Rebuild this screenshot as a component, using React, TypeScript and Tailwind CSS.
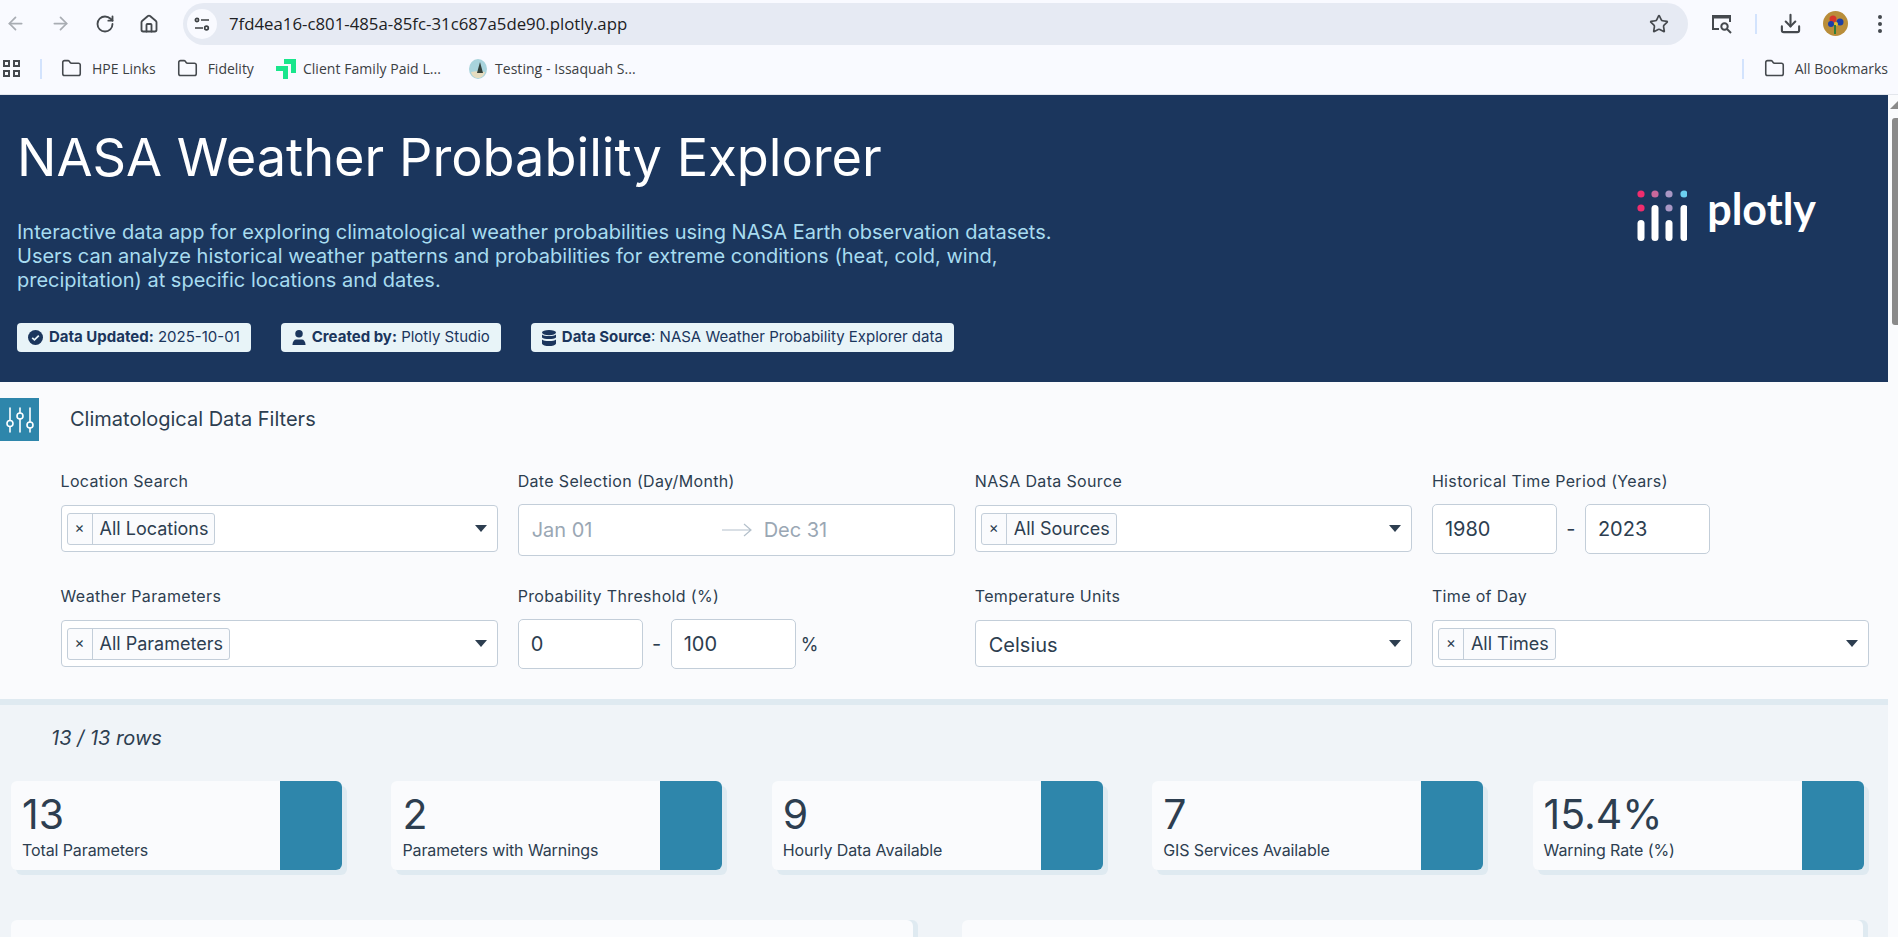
import React from 'react';
import { ArrowLeft, ArrowRight, RotateCw, Home, Star, Download, Folder } from 'lucide-react';

const inter = 'font-["Inter",sans-serif]';

const Tag = ({ label }: { label: string }) => (
  <div className="flex items-stretch h-[32px] border border-[#c3ced9] rounded-[3px] bg-[#fafbfd]">
    <span className="w-[25px] flex items-center justify-center border-r border-[#c3ced9] text-[15px] text-[#2d3e50]">×</span>
    <span className="pl-[7px] pr-[6px] flex items-center text-[18px] text-[#2d3e50]">{label}</span>
  </div>
);

const Caret = () => (
  <svg width="12" height="7" viewBox="0 0 12 7" className="shrink-0">
    <path d="M0 0h12L6 7z" fill="#2d3e50" />
  </svg>
);

const MultiSelect = ({ label }: { label: string }) => (
  <div className="h-[47px] mt-[1px] flex items-center justify-between pl-[5px] pr-[10px] bg-white border border-[#c3ced9] rounded-[4px]">
    <Tag label={label} />
    <Caret />
  </div>
);

const Field = ({ label, children }: { label: string; children: React.ReactNode }) => (
  <div className="flex flex-col">
    <label className="h-[24px] mb-[11px] flex items-center text-[16px] tracking-[0.35px] text-[#2d3e50]">{label}</label>
    {children}
  </div>
);

const NumberBox = ({ value }: { value: string }) => (
  <div className="w-[125px] h-[50px] flex items-center pl-[12px] bg-white border border-[#c3ced9] rounded-[5px] text-[20px] text-[#2d3e50]">
    {value}
  </div>
);

const Pill = ({ icon, bold, rest }: { icon: React.ReactNode; bold: string; rest: string }) => (
  <div className="h-[29px] flex items-center gap-[6px] px-[11px] bg-[#e8f4f8] rounded-[4px] text-[15px] text-[#1b365d]">
    {icon}
    <span className="whitespace-nowrap"><b className="font-bold">{bold}</b>{rest}</span>
  </div>
);

const Stat = ({ value, label }: { value: string; label: string }) => (
  <div className="flex h-[89px] w-[331px] bg-[#fafbfd] rounded-[6px] overflow-hidden shadow-[5px_5px_0_#dfeaf1]">
    <div className="flex-1 pl-[11px] pt-[11px] text-[#2d3e50]">
      <div className="text-[41px] leading-[44px]">{value}</div>
      <div className="text-[16px] mt-[2px] tracking-[-0.1px]">{label}</div>
    </div>
    <div className="w-[62px] bg-[#2e86ab]" />
  </div>
);

const BookmarkFolder = ({ label }: { label: string }) => (
  <div className="flex items-center gap-[10px] text-[14px] text-[#3c4043] whitespace-nowrap">
    <Folder size={21} strokeWidth={1.8} className="text-[#45494e]" />
    {label}
  </div>
);

const PlotlyLogo = () => (
  <div className="flex items-center gap-[20px]">
    <svg width="50" height="52" viewBox="0 0 50 52">
      <circle cx="4" cy="4" r="3.6" fill="#ef2d6e" />
      <circle cx="18" cy="4" r="3.6" fill="#c9689b" />
      <circle cx="32" cy="4" r="3.6" fill="#a997c4" />
      <circle cx="47" cy="4" r="3.6" fill="#6cd0f0" />
      <circle cx="4" cy="18" r="3.6" fill="#ef2d6e" />
      <circle cx="32" cy="18" r="3.6" fill="#a997c4" />
      <rect x="0.5" y="30" width="7" height="21" rx="3.5" fill="#fff" />
      <rect x="14.5" y="15" width="7" height="36" rx="3.5" fill="#fff" />
      <rect x="28.5" y="30" width="7" height="21" rx="3.5" fill="#fff" />
      <rect x="43.5" y="15" width="7" height="36" rx="3.5" fill="#fff" />
    </svg>
    <span className='mb-[14px] font-["Lato",sans-serif] font-bold text-[43px] leading-none text-white'>plotly</span>
  </div>
);

export default function App() {
  return (
    <div className='w-[1898px] h-[937px] overflow-hidden flex flex-col font-["Inter",sans-serif] bg-[#f0f4f8]'>
      {/* browser toolbar */}
      <div className='h-[47px] shrink-0 flex items-center bg-[#f9faff] font-["Open_Sans",sans-serif]'>
        <div className="w-[183px] shrink-0 flex items-center pl-[5px] gap-[24px] text-[#45494e]">
          <ArrowLeft size={21} className="text-[#a9adb3]" />
          <ArrowRight size={21} className="text-[#a9adb3]" />
          <RotateCw size={20} strokeWidth={2.2} />
          <Home size={20} strokeWidth={2.2} />
        </div>
        <div className="w-[1505px] h-[42px] flex items-center justify-between pl-[4px] pr-[19px] rounded-full bg-[#e6eaf3]">
          <div className="flex items-center gap-[12px]">
            <div className="w-[30px] h-[30px] rounded-full bg-[#f9faff] flex items-center justify-center">
              <svg width="16" height="14" viewBox="0 0 16 14" fill="none" stroke="#3c4043" strokeWidth="1.7">
                <circle cx="3" cy="3" r="1.6" />
                <path d="M7 3h8M1 11h8" />
                <circle cx="12.5" cy="11" r="1.8" />
              </svg>
            </div>
            <span className="text-[16.8px] text-[#202124]">7fd4ea16-c801-485a-85fc-31c687a5de90.plotly.app</span>
          </div>
          <Star size={20} strokeWidth={2} className="text-[#45494e]" />
        </div>
        <div className="flex-1 flex items-center pl-[23px] text-[#45494e]">
          <svg width="22" height="20" viewBox="0 0 22 20" fill="none" stroke="currentColor" strokeWidth="2">
            <path d="M8 15H2V2h17v6" />
            <path d="M2 3h17" strokeWidth="3" />
            <circle cx="13.5" cy="12.5" r="3.2" />
            <path d="M16 15l4 4" />
          </svg>
          <div className="w-[2px] h-[20px] bg-[#d3e3fd] ml-[22px]" />
          <Download size={23} strokeWidth={2.2} className="ml-[22px]" />
          <svg width="25" height="25" viewBox="0 0 25 25" className="ml-[21px]">
            <circle cx="12.5" cy="12.5" r="12.5" fill="#b98d3a" />
            <circle cx="10" cy="8" r="3.5" fill="#d8352a" />
            <circle cx="17" cy="11" r="3.5" fill="#1c3fa8" />
            <circle cx="8" cy="13" r="3" fill="#1c3fa8" />
            <circle cx="13" cy="13" r="2" fill="#e6c02e" />
            <path d="M12 14v9" stroke="#2f7d3a" strokeWidth="2" />
          </svg>
          <div className="flex flex-col gap-[3px] ml-[30px]">
            <span className="w-[4px] h-[4px] rounded-full bg-[#45494e]" />
            <span className="w-[4px] h-[4px] rounded-full bg-[#45494e]" />
            <span className="w-[4px] h-[4px] rounded-full bg-[#45494e]" />
          </div>
        </div>
      </div>

      {/* bookmarks bar */}
      <div className='h-[48px] shrink-0 flex items-center pb-[4px] bg-[#f9faff] border-b border-[#e3e6ec] font-["Open_Sans",sans-serif]'>
        <div className="grid grid-cols-2 gap-[3px] ml-[3px]">
          {[0, 1, 2, 3].map((i) => (
            <span key={i} className="w-[7px] h-[7px] border-2 border-[#45494e]" />
          ))}
        </div>
        <div className="w-[2px] h-[20px] bg-[#d3e3fd] ml-[20px] mr-[19px]" />
        <BookmarkFolder label="HPE Links" />
        <div className="w-[21px]" />
        <BookmarkFolder label="Fidelity" />
        <svg width="20" height="20" viewBox="0 0 20 20" className="ml-[22px]">
          <path d="M8 0h12v14h-5V5H8zM0 7h12v13H7v-8H0z" fill="#19e68c" />
        </svg>
        <span className="ml-[7px] text-[14px] tracking-[0.05px] text-[#3c4043] whitespace-nowrap">Client Family Paid L...</span>
        <svg width="18" height="20" viewBox="0 0 18 20" className="ml-[28px]">
          <ellipse cx="9" cy="10" rx="9" ry="10" fill="#a8d3dc" />
          <path d="M2 13c4-1 10-1 14 0-1 4-4 6-7 6s-6-2-7-6z" fill="#e5dcc0" />
          <path d="M11 3l3 11H8z" fill="#33403a" />
        </svg>
        <span className="ml-[8px] text-[14px] tracking-[0.05px] text-[#3c4043] whitespace-nowrap">Testing - Issaquah S...</span>
        <div className="flex-1" />
        <div className="w-[2px] h-[20px] bg-[#d3e3fd] mr-[20px]" />
        <BookmarkFolder label="All Bookmarks" />
        <div className="w-[10px]" />
      </div>

      <div className="flex-1 flex min-h-0">
        <div className={`flex-1 min-w-0 ${inter}`}>
          {/* banner */}
          <header className="h-[287px] bg-[#1b365d] flex justify-between pl-[17px]">
            <div className="flex flex-col">
              <h1 className="mt-[28px] text-[52.3px] leading-[68px] text-white whitespace-nowrap">NASA Weather Probability Explorer</h1>
              <p className="mt-[29px] w-[1060px] text-[20px] leading-[24px] text-[#a8dcf0]">
                Interactive data app for exploring climatological weather probabilities using NASA Earth observation datasets.
                <br />
                Users can analyze historical weather patterns and probabilities for extreme conditions (heat, cold, wind,
                <br />
                precipitation) at specific locations and dates.
              </p>
              <div className="flex gap-[30px] mt-[31px]">
                <Pill
                  bold="Data Updated:"
                  rest=" 2025-10-01"
                  icon={
                    <svg width="15" height="15" viewBox="0 0 16 16">
                      <circle cx="8" cy="8" r="8" fill="#1b365d" />
                      <path d="M4.5 8.3l2.4 2.3 4.6-4.6" stroke="#e8f4f8" strokeWidth="1.8" fill="none" />
                    </svg>
                  }
                />
                <Pill
                  bold="Created by:"
                  rest=" Plotly Studio"
                  icon={
                    <svg width="14" height="15" viewBox="0 0 14 16" fill="#1b365d">
                      <circle cx="7" cy="4" r="4" />
                      <path d="M0 16c0-4 2-6 4-6h6c2 0 4 2 4 6z" />
                    </svg>
                  }
                />
                <Pill
                  bold="Data Source"
                  rest=": NASA Weather Probability Explorer data"
                  icon={
                    <svg width="14" height="16" viewBox="0 0 14 16" fill="#1b365d">
                      <ellipse cx="7" cy="2.6" rx="7" ry="2.6" />
                      <path d="M0 4.5c2 2 12 2 14 0v3c-2 2-12 2-14 0zM0 9.5c2 2 12 2 14 0v3.9C14 15 10 16 7 16s-7-1-7-2.6z" />
                    </svg>
                  }
                />
              </div>
            </div>
            <div className="mt-[92px] mr-[72px]">
              <PlotlyLogo />
            </div>
          </header>

          {/* filters */}
          <section className="h-[323px] bg-[#fafbfd] border-b-[6px] border-[#dfeaf1]">
            <div className="pt-[16px] flex items-center">
              <div className="w-[39px] h-[43px] bg-[#2e86ab] flex items-center justify-center">
                <svg width="28" height="26" viewBox="0 0 28 26" fill="none" stroke="#fff" strokeWidth="1.6" strokeLinecap="round">
                  <path d="M4 1v12M4 20v5M14 1v5M14 12v13M24 1v14M24 21v4" />
                  <circle cx="4" cy="16.5" r="3" />
                  <circle cx="14" cy="9" r="3" />
                  <circle cx="24" cy="18" r="3" />
                </svg>
              </div>
              <h2 className="ml-[31px] pb-[2px] text-[20px] text-[#2d3e50]">Climatological Data Filters</h2>
            </div>
            <div className="grid grid-cols-4 gap-x-[20px] gap-y-[28px] pl-[60.5px] pr-[19px] mt-[28px]">
              <Field label="Location Search"><MultiSelect label="All Locations" /></Field>
              <Field label="Date Selection (Day/Month)">
                <div className="h-[52px] flex items-center pl-[13px] bg-white border border-[#c3ced9] rounded-[4px] text-[20px] text-[#9aa7b4]">
                  <span className="w-[190px]">Jan 01</span>
                  <svg width="30" height="14" viewBox="0 0 30 14" fill="none" stroke="#b4c0cb" strokeWidth="1.2">
                    <path d="M0 7h29M22 1l7 6-7 6" />
                  </svg>
                  <span className="ml-[12px]">Dec 31</span>
                </div>
              </Field>
              <Field label="NASA Data Source"><MultiSelect label="All Sources" /></Field>
              <Field label="Historical Time Period (Years)">
                <div className="flex items-center">
                  <NumberBox value="1980" />
                  <span className="w-[28px] text-center text-[20px] text-[#2d3e50]">-</span>
                  <NumberBox value="2023" />
                </div>
              </Field>
              <Field label="Weather Parameters"><MultiSelect label="All Parameters" /></Field>
              <Field label="Probability Threshold (%)">
                <div className="flex items-center">
                  <NumberBox value="0" />
                  <span className="w-[28px] text-center text-[20px] text-[#2d3e50]">-</span>
                  <NumberBox value="100" />
                  <span className="ml-[5px] text-[18px] text-[#2d3e50]">%</span>
                </div>
              </Field>
              <Field label="Temperature Units">
                <div className="h-[47px] mt-[1px] flex items-center justify-between pl-[13px] pr-[10px] bg-white border border-[#c3ced9] rounded-[4px] text-[20px] text-[#2d3e50]">
                  <span className="pt-[3px]">Celsius</span>
                  <Caret />
                </div>
              </Field>
              <Field label="Time of Day"><MultiSelect label="All Times" /></Field>
            </div>
          </section>

          {/* results */}
          <div className="pl-[11px]">
            <p className="pt-[21px] pl-[40px] text-[20px] leading-[24px] italic text-[#2d3e50]">13 / 13 rows</p>
            <div className="flex gap-[49.4px] mt-[31px]">
              <Stat value="13" label="Total Parameters" />
              <Stat value="2" label="Parameters with Warnings" />
              <Stat value="9" label="Hourly Data Available" />
              <Stat value="7" label="GIS Services Available" />
              <Stat value="15.4%" label="Warning Rate (%)" />
            </div>
            <div className="flex gap-[49px] mt-[50px]">
              <div className="w-[902px] h-[40px] bg-[#fafbfd] rounded-t-[6px] shadow-[5px_0_0_#dfeaf1]" />
              <div className="w-[901px] h-[40px] bg-[#fafbfd] rounded-t-[6px] shadow-[5px_0_0_#dfeaf1]" />
            </div>
          </div>
        </div>

        {/* page scrollbar */}
        <div className="w-[10px] shrink-0 bg-[#fafbfd] flex flex-col items-end">
          <svg width="8" height="8" viewBox="0 0 8 8" className="mt-[6px]">
            <path d="M0 8l8-8v8z" fill="#8a8a8a" />
          </svg>
          <div className="w-[6px] h-[207px] mt-[9px] bg-[#8a8a8a] rounded-l-[3px]" />
        </div>
      </div>
    </div>
  );
}
